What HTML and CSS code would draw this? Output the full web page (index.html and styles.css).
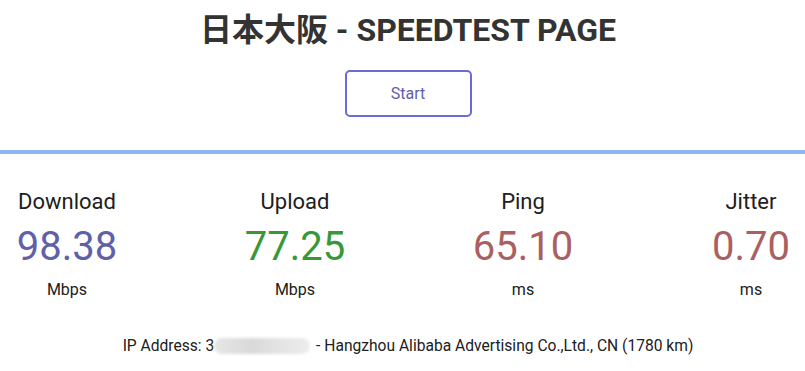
FILE: index.html
```html
<!DOCTYPE html>
<html lang="en">
<head>
<meta charset="UTF-8" />
<meta name="viewport" content="width=device-width, initial-scale=1" />
<title>日本大阪 - SPEEDTEST PAGE</title>
<link rel="stylesheet" href="styles.css">
</head>
<body>
  <h1>日本大阪 - SPEEDTEST PAGE</h1>
  <div class="start-wrap">
    <div id="startStopBtn" class="start-btn">Start</div>
  </div>
  <div class="test-wrapper">
    <div class="test-group">
      <div class="test-area">
        <div class="test-name">Download</div>
        <div class="meter-text dl">98.38</div>
        <div class="unit">Mbps</div>
      </div>
      <div class="test-area">
        <div class="test-name">Upload</div>
        <div class="meter-text ul">77.25</div>
        <div class="unit">Mbps</div>
      </div>
      <div class="test-area">
        <div class="test-name">Ping</div>
        <div class="meter-text ping">65.10</div>
        <div class="unit">ms</div>
      </div>
      <div class="test-area">
        <div class="test-name">Jitter</div>
        <div class="meter-text ping">0.70</div>
        <div class="unit">ms</div>
      </div>
    </div>
    <div id="ipArea" class="ip-area">
      IP Address: 3<span class="masked"></span> - Hangzhou Alibaba Advertising Co.,Ltd., CN (1780 km)
    </div>
  </div>
</body>
</html>
```

FILE: styles.css
```css
html, body {
  margin: 0;
  padding: 0;
  background: #ffffff;
  color: #202020;
  font-family: Roboto, "Noto Sans CJK JP", sans-serif;
  overflow: hidden;
}
h1 {
  margin: 0;
  padding: 10px 0 0 11px;
  text-align: center;
  font-size: 32px;
  line-height: 40px;
  font-weight: 700;
  color: #333333;
}
.start-wrap {
  display: flex;
  justify-content: center;
  padding: 20px 0 0 11px;
}
.start-btn {
  width: 123px;
  height: 43px;
  border: 2px solid #6b6ad6;
  border-radius: 5px;
  color: #6060aa;
  font-size: 16px;
  line-height: 43px;
  text-align: center;
  cursor: pointer;
}
.test-wrapper {
  margin-top: 33px;
  border-top: 4px solid #8cb8f2;
}
.test-group {
  display: flex;
  gap: 128px;
  padding-left: 17px;
  padding-top: 35px;
}
.test-area {
  width: 100px;
  display: flex;
  flex-direction: column;
  align-items: center;
  white-space: nowrap;
}
.test-name {
  font-size: 22px;
  line-height: 26px;
  color: #202020;
}
.meter-text {
  margin-top: 9px;
  font-size: 40px;
  line-height: 46px;
}
.meter-text.dl { color: #6060aa; }
.meter-text.ul { color: #389838; }
.meter-text.ping { color: #aa6060; }
.unit {
  margin-top: 11px;
  font-size: 16px;
  line-height: 18px;
  color: #202020;
}
.ip-area {
  margin-top: 37px;
  padding-left: 11px;
  text-align: center;
  font-size: 15.6px;
  line-height: 20px;
  color: #202020;
}
.masked {
  display: inline-block;
  width: 96px;
  height: 16px;
  margin-right: 2px;
  vertical-align: -3px;
  border-radius: 8px;
  background: linear-gradient(90deg, #e6e6e6, #d9d9d9 40%, #e4e4e4 70%, #ededed);
  filter: blur(1.5px);
}
```
